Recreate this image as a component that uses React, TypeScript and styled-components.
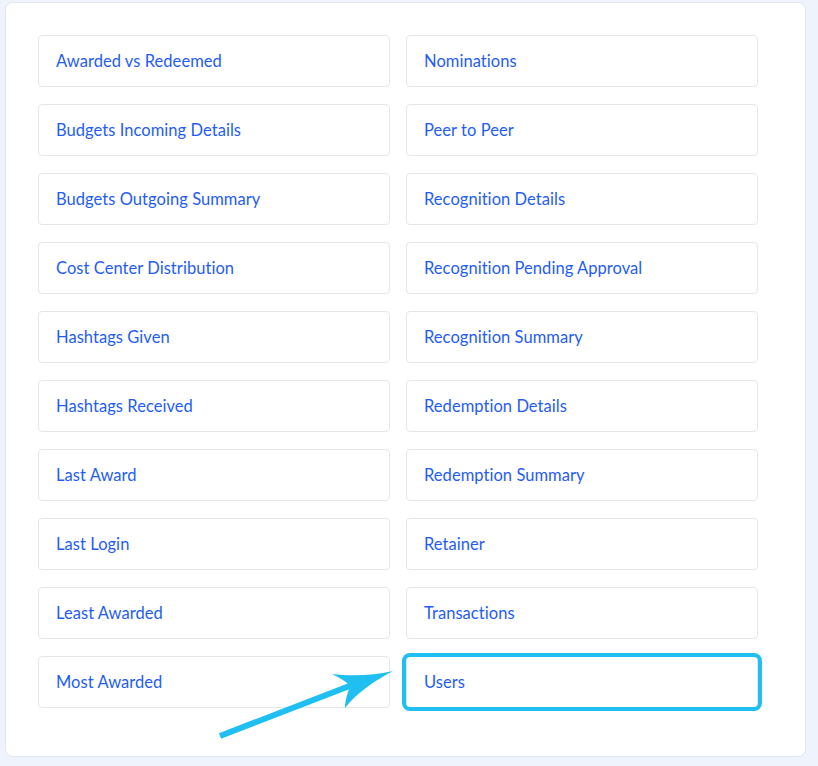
import React from "react";
import styled, { createGlobalStyle } from "styled-components";

const Global = createGlobalStyle`
  html, body { margin: 0; padding: 0; background: #eff3fb; }
  body { font-family: "Lato", "Open Sans", sans-serif; }
`;

const Page = styled.div`
  width: 818px;
  height: 766px;
  box-sizing: border-box;
  padding: 2px 12px 0 5px;
  position: relative;
`;

const Card = styled.div`
  box-sizing: border-box;
  width: 801px;
  height: 755px;
  background: #ffffff;
  border: 1px solid #e2e6ee;
  border-radius: 8px;
  padding: 32px 47px 0 32px;
`;

const Grid = styled.div`
  display: grid;
  grid-template-columns: 352px 352px;
  column-gap: 16px;
  row-gap: 17px;
`;

const Tile = styled.div`
  box-sizing: border-box;
  height: 52px;
  border: 1px solid #e3e6eb;
  border-radius: 4px;
  display: flex;
  align-items: center;
  padding: 0 0 0 17px;
  font-size: 16.5px;
  color: #1f5df6;
  letter-spacing: 0.05px;
  position: relative;
`;

const Highlight = styled.div`
  position: absolute;
  left: -5px;
  right: -5px;
  top: -4px;
  bottom: -4px;
  border: 4px solid #1fbff2;
  border-radius: 8px;
  pointer-events: none;
`;

const Arrow = styled.svg`
  position: absolute;
  left: 0;
  top: 0;
  pointer-events: none;
`;

const left = [
  "Awarded vs Redeemed",
  "Budgets Incoming Details",
  "Budgets Outgoing Summary",
  "Cost Center Distribution",
  "Hashtags Given",
  "Hashtags Received",
  "Last Award",
  "Last Login",
  "Least Awarded",
  "Most Awarded",
];
const right = [
  "Nominations",
  "Peer to Peer",
  "Recognition Details",
  "Recognition Pending Approval",
  "Recognition Summary",
  "Redemption Details",
  "Redemption Summary",
  "Retainer",
  "Transactions",
  "Users",
];

export default function App() {
  const items: string[] = [];
  left.forEach((l, i) => {
    items.push(l, right[i]);
  });
  return (
    <>
      <Global />
      <Page>
        <Card>
          <Grid>
            {items.map((t) => (
              <Tile key={t}>
                {t}
                {t === "Users" && <Highlight />}
              </Tile>
            ))}
          </Grid>
        </Card>
        <Arrow width="818" height="766" viewBox="0 0 818 766">
          <line x1="220" y1="736" x2="352" y2="685" stroke="#1fbff2" strokeWidth="6" />
          <path
            d="M393 671 C372 676 350 676 332 674 C340 678 347 682 350 686 C348 692 345 700 345 708 C356 694 372 682 393 671 Z"
            fill="#1fbff2"
          />
        </Arrow>
      </Page>
    </>
  );
}
